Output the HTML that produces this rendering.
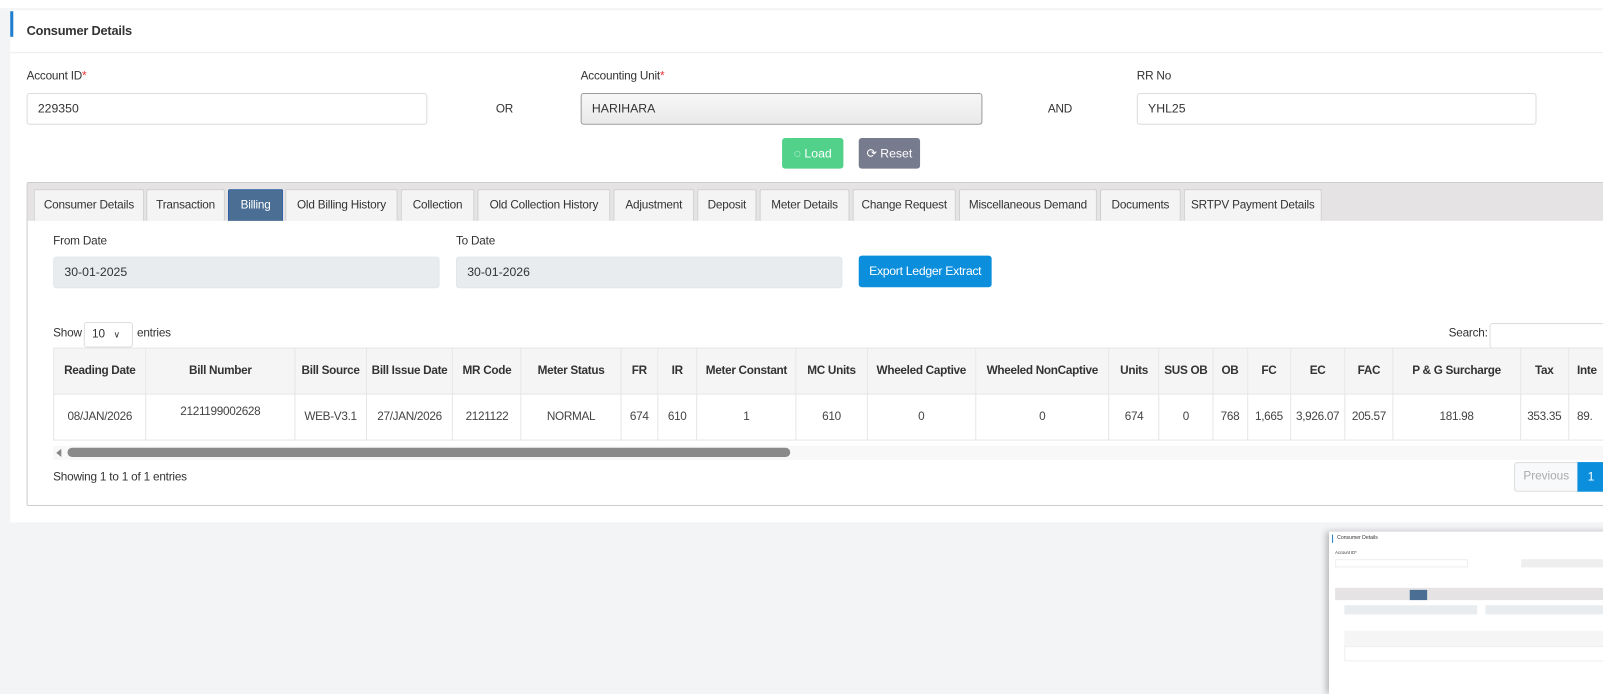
<!DOCTYPE html>
<html><head><meta charset="utf-8"><style>
*{box-sizing:border-box;margin:0;padding:0}
html,body{width:1603px;height:679px;overflow:hidden;background:#f3f4f6}
#w{position:absolute;left:0;top:0;width:1700px;height:664px;transform:scale(1.0223);transform-origin:0 0;font-family:"Liberation Sans",sans-serif;font-size:12px;color:#333}
.a{position:absolute}
.card{left:10px;top:10px;width:1600px;height:501px;background:#fff}
.lbl{font-size:11.5px;color:#333;letter-spacing:-.2px}
.inp{border:1px solid #dcdcdc;border-radius:3px;background:#fff;font-size:12px;padding:0 10px;line-height:28px}
.tab{top:185px;height:31px;border:1px solid #cfcfcf;border-bottom:none;background:#f4f4f4;font-size:11.5px;text-align:center;line-height:30px;color:#333;letter-spacing:-.2px;border-radius:2px 2px 0 0}
table{border-collapse:collapse;position:absolute;left:52px;top:340px;width:1543px;font-size:11.5px;letter-spacing:-.3px;table-layout:fixed}
td,th{border:1px solid #e6e6e6;text-align:center;white-space:nowrap;overflow:hidden}
th{background:#f5f5f5;height:45px;font-weight:bold;color:#333}
td{height:45px;color:#444}
</style></head><body><div id="w">
<div class="a" style="left:0;top:0;width:1603px;height:8px;background:#fff"></div>
<div class="a card"></div>
<div class="a" style="left:10px;top:11px;width:3px;height:25px;background:#1f7fcf"></div>
<div class="a" style="left:26px;top:23px;font-weight:bold;font-size:12.5px;color:#333;letter-spacing:-.2px">Consumer Details</div>
<div class="a" style="left:10px;top:51px;width:1593px;height:1px;background:#eceeef"></div>

<div class="a lbl" style="left:26px;top:69px">Account ID<span style="color:#e33">*</span></div>
<div class="a inp" style="left:26px;top:91px;width:392px;height:31px">229350</div>
<div class="a lbl" style="left:485px;top:101px">OR</div>
<div class="a lbl" style="left:568px;top:69px">Accounting Unit<span style="color:#e33">*</span></div>
<div class="a inp" style="left:568px;top:91px;width:393px;height:31px;border-color:#9a9a9a;background:linear-gradient(#f7f7f7,#e9e9e9)">HARIHARA</div>
<div class="a lbl" style="left:1025px;top:101px">AND</div>
<div class="a lbl" style="left:1112px;top:69px">RR No</div>
<div class="a inp" style="left:1112px;top:91px;width:391px;height:31px">YHL25</div>

<div class="a" style="left:765px;top:135px;width:60px;height:30px;background:#52d18b;border-radius:3px;color:#fff;font-size:12px;line-height:30px;text-align:center">◌ Load</div>
<div class="a" style="left:840px;top:135px;width:60px;height:30px;background:#767b8e;border-radius:3px;color:#fff;font-size:12px;line-height:30px;text-align:center">⟳ Reset</div>

<div class="a" style="left:26px;top:178px;width:1590px;height:317px;border:1px solid #ccc;border-radius:2px"></div>
<div class="a" style="left:27px;top:179px;width:1576px;height:37px;background:#e5e3e3"></div>
<div class="a tab" style="left:33px;width:108px">Consumer Details</div>
<div class="a tab" style="left:143px;width:77px">Transaction</div>
<div class="a tab" style="left:223px;width:54px;background:#4b6f94;color:#fff;border-color:#2f5fa8">Billing</div>
<div class="a tab" style="left:279px;width:110px">Old Billing History</div>
<div class="a tab" style="left:392px;width:72px">Collection</div>
<div class="a tab" style="left:467px;width:130px">Old Collection History</div>
<div class="a tab" style="left:600px;width:79px">Adjustment</div>
<div class="a tab" style="left:682px;width:58px">Deposit</div>
<div class="a tab" style="left:743px;width:88px">Meter Details</div>
<div class="a tab" style="left:834px;width:101px">Change Request</div>
<div class="a tab" style="left:938px;width:135px">Miscellaneous Demand</div>
<div class="a tab" style="left:1076px;width:79px">Documents</div>
<div class="a tab" style="left:1158px;width:135px">SRTPV Payment Details</div>

<div class="a lbl" style="left:52px;top:230px">From Date</div>
<div class="a inp" style="left:52px;top:251px;width:378px;height:31px;background:#e9ecef;border-color:#e3e6e9;line-height:29px">30-01-2025</div>
<div class="a lbl" style="left:446px;top:230px">To Date</div>
<div class="a inp" style="left:446px;top:251px;width:378px;height:31px;background:#e9ecef;border-color:#e3e6e9;line-height:29px">30-01-2026</div>
<div class="a" style="left:840px;top:250px;width:130px;height:31px;background:#0b8fdd;border-radius:3px;color:#fff;font-size:12px;line-height:31px;text-align:center;letter-spacing:-.3px">Export Ledger Extract</div>

<div class="a lbl" style="left:52px;top:320px">Show</div>
<div class="a" style="left:82px;top:315px;width:48px;height:25px;border:1px solid #ddd;border-radius:3px;font-size:11.5px;line-height:23px;padding-left:7px">10 <span style="font-size:9px;margin-left:5px">∨</span></div>
<div class="a lbl" style="left:134px;top:320px">entries</div>
<div class="a lbl" style="left:1417px;top:320px">Search:</div>
<div class="a" style="left:1457px;top:316px;width:160px;height:25px;border:1px solid #ddd;border-radius:3px"></div>

<table>
<colgroup><col style="width:90px"><col style="width:145px"><col style="width:70px"><col style="width:84px"><col style="width:67px"><col style="width:97px"><col style="width:36px"><col style="width:38px"><col style="width:97px"><col style="width:69px"><col style="width:106px"><col style="width:130px"><col style="width:49px"><col style="width:52px"><col style="width:34px"><col style="width:42px"><col style="width:53px"><col style="width:47px"><col style="width:124px"><col style="width:47px"><col style="width:60px"></colgroup>
<tr><th>Reading Date</th><th>Bill Number</th><th>Bill Source</th><th>Bill Issue Date</th><th>MR Code</th><th>Meter Status</th><th>FR</th><th>IR</th><th>Meter Constant</th><th>MC Units</th><th>Wheeled Captive</th><th>Wheeled NonCaptive</th><th>Units</th><th>SUS OB</th><th>OB</th><th>FC</th><th>EC</th><th>FAC</th><th>P &amp; G Surcharge</th><th>Tax</th><th style="text-align:left;padding-left:8px">Inte</th></tr>
<tr><td>08/JAN/2026</td><td style="vertical-align:top;padding-top:11px">2121199002628</td><td>WEB-V3.1</td><td>27/JAN/2026</td><td>2121122</td><td>NORMAL</td><td>674</td><td>610</td><td>1</td><td>610</td><td>0</td><td>0</td><td>674</td><td>0</td><td>768</td><td>1,665</td><td>3,926.07</td><td>205.57</td><td>181.98</td><td>353.35</td><td style="text-align:left;padding-left:8px">89.</td></tr>
</table>

<div class="a" style="left:52px;top:436px;width:1551px;height:14px;background:#f8f8f8"></div>
<div class="a" style="left:55px;top:439px;width:0;height:0;border-top:4px solid transparent;border-bottom:4px solid transparent;border-right:5px solid #888"></div>
<div class="a" style="left:66px;top:438px;width:707px;height:9px;background:#8a8a8a;border-radius:5px"></div>
<div class="a lbl" style="left:52px;top:461px">Showing 1 to 1 of 1 entries</div>
<div class="a" style="left:1481px;top:452px;width:63px;height:29px;border:1px solid #ddd;border-radius:3px 0 0 3px;background:#f8f9fa;color:#aaa;font-size:11.5px;line-height:27px;text-align:center">Previous</div>
<div class="a" style="left:1543px;top:452px;width:30px;height:29px;background:#0b8fdd;color:#fff;font-size:12px;line-height:29px;padding-left:10px">1</div>

<div class="a" style="left:1300px;top:520px;width:303px;height:159px;background:#fff;box-shadow:-3px 0 6px rgba(0,0,0,.25);overflow:hidden">
<div class="a" style="left:3px;top:3px;width:1px;height:8px;background:#1f7fcf"></div>
<div class="a" style="left:8px;top:3px;font-size:5px">Consumer Details</div>
<div class="a" style="left:6px;top:18px;font-size:4px">Account ID*</div>
<div class="a" style="left:6px;top:27px;width:130px;height:8px;border:1px solid #eee"></div>
<div class="a" style="left:188px;top:27px;width:115px;height:8px;background:#eee"></div>
<div class="a" style="left:306px;top:42px;width:10px;height:9px;background:#52d18b"></div>
<div class="a" style="left:6px;top:55px;width:297px;height:12px;background:#e5e3e3"></div>
<div class="a" style="left:79px;top:57px;width:17px;height:10px;background:#4b6f94"></div>
<div class="a" style="left:15px;top:72px;width:130px;height:9px;background:#e9ecef"></div>
<div class="a" style="left:153px;top:72px;width:150px;height:9px;background:#e9ecef"></div>
<div class="a" style="left:15px;top:97px;width:288px;height:15px;background:#f5f5f5"></div>
<div class="a" style="left:15px;top:112px;width:288px;height:15px;border:1px solid #eee"></div>
</div>
</div></body></html>
